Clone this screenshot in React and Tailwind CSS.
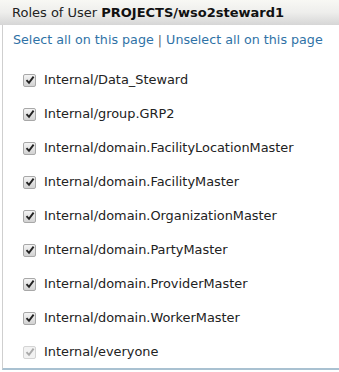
import React from 'react';

const roles = [
  'Internal/Data_Steward',
  'Internal/group.GRP2',
  'Internal/domain.FacilityLocationMaster',
  'Internal/domain.FacilityMaster',
  'Internal/domain.OrganizationMaster',
  'Internal/domain.PartyMaster',
  'Internal/domain.ProviderMaster',
  'Internal/domain.WorkerMaster',
];

function Check({ disabled }) {
  return (
    <span
      className={`flex h-[13px] w-[13px] shrink-0 items-center justify-center rounded-[2px] border ${
        disabled ? 'border-[#d4d4d4] bg-[#f2f2f2]' : 'border-[#a8a8a8] bg-gradient-to-b from-[#f4f4f4] to-[#d2d2d2]'
      }`}
    >
      <svg width="10" height="10" viewBox="0 0 10 10">
        <path
          d="M1.5 5.2 L4 7.8 L8.6 1.6"
          fill="none"
          stroke={disabled ? '#a9a9a9' : '#222'}
          strokeWidth="1.9"
        />
      </svg>
    </span>
  );
}

export default function App() {
  return (
    <div className="h-[372px] w-[339px] bg-white font-['DejaVu_Sans',sans-serif] text-[12.7px] text-[#222]">
      <div className="flex h-[25px] items-center bg-gradient-to-b from-[#f8f8f4] via-[#eeeeec] to-[#d6d6d6] pl-[12px] text-[13px]">
        Roles of User <span className="ml-[4px] font-bold text-[#111]">PROJECTS/wso2steward1</span>
      </div>
      <div className="ml-[2px] h-[345px] border-b-2 border-l border-b-[#a9c1d1] border-l-[#cfcfcf]">
        <div className="pl-[10px] pt-[5px] text-[#2f72a6]">
          Select all on this page <span className="text-[#666]">|</span> Unselect all on this page
        </div>
        <div className="mt-[24px] flex flex-col gap-[20px] pl-[20px] text-[12.9px]">
          {roles.map((r) => (
            <div key={r} className="flex h-[14px] items-center gap-[8px]">
              <Check />
              <span>{r}</span>
            </div>
          ))}
          <div className="flex h-[14px] items-center gap-[8px]">
            <Check disabled />
            <span>Internal/everyone</span>
          </div>
        </div>
      </div>
    </div>
  );
}
